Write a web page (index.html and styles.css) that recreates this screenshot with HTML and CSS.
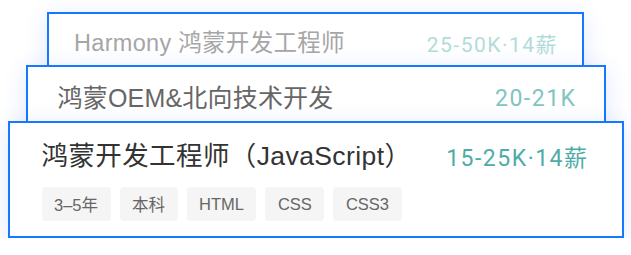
FILE: index.html
```html
<!DOCTYPE html>
<html lang="zh-CN">
<head>
    <meta charset="UTF-8">
    <meta name="viewport" content="width=device-width, initial-scale=1.0">
    <title>职位卡片</title>
    <link rel="stylesheet" href="styles.css">
</head>
<body>
    <div class="card-stack">
        <div class="job-card job-card--back">
            <div class="job-head">
                <span class="job-title">Harmony 鸿蒙开发工程师</span>
                <span class="job-salary">25-50K·14薪</span>
            </div>
        </div>
        <div class="job-card job-card--mid">
            <div class="job-head">
                <span class="job-title">鸿蒙OEM&amp;北向技术开发</span>
                <span class="job-salary">20-21K</span>
            </div>
        </div>
        <div class="job-card job-card--front">
            <div class="job-head">
                <span class="job-title">鸿蒙开发工程师（JavaScript）</span>
                <span class="job-salary">15-25K·14薪</span>
            </div>
            <div class="job-tags">
                <span class="tag">3–5年</span>
                <span class="tag">本科</span>
                <span class="tag">HTML</span>
                <span class="tag">CSS</span>
                <span class="tag">CSS3</span>
            </div>
        </div>
    </div>
</body>
</html>
```

FILE: styles.css
```css
body {
    margin: 0;
    padding: 0;
    background-color: #ffffff;
    font-family: "Liberation Sans", "Noto Sans CJK SC", sans-serif;
}
.card-stack {
    display: flex;
    flex-direction: column;
    align-items: center;
    padding-top: 12px;
}
.job-card {
    box-sizing: border-box;
    background-color: #ffffff;
    border: 2px solid #1677ff;
    box-shadow: 0 4px 22px rgba(40, 100, 255, 0.14);
}
.job-head {
    display: flex;
    justify-content: space-between;
    align-items: center;
}
.job-salary {
    font-family: Roboto, "Noto Sans CJK SC", sans-serif;
    letter-spacing: 1.5px;
}
.job-card--back {
    width: 537px;
    height: 70px;
    margin-bottom: -17px;
    padding: 14px 24px 0 25px;
}
.job-card--back .job-title {
    font-size: 23.5px;
    line-height: 30px;
    color: #a6a6a6;
    letter-spacing: 0.3px;
}
.job-card--back .job-salary {
    font-size: 21px;
    color: #b2dcd9;
}
.job-card--mid {
    width: 580px;
    height: 70px;
    margin-bottom: -14px;
    padding: 15px 27px 0 30px;
}
.job-card--mid .job-title {
    font-size: 25px;
    line-height: 32px;
    color: #666666;
    letter-spacing: 0.2px;
}
.job-card--mid .job-salary {
    font-size: 23px;
    color: #7fc5c1;
}
.job-card--front {
    width: 616px;
    padding: 16px 33px 15px 32px;
}
.job-card--front .job-title {
    font-size: 26.5px;
    line-height: 34px;
    color: #333333;
    letter-spacing: 0.4px;
}
.job-card--front .job-salary {
    font-size: 23px;
    color: #4eaca8;
}
.job-tags {
    display: flex;
    gap: 9px;
    margin-top: 14px;
}
.tag {
    display: flex;
    align-items: center;
    height: 34px;
    padding: 0 12.5px;
    border-radius: 4px;
    background-color: #f5f5f5;
    color: #666666;
    font-size: 16.5px;
}
```
